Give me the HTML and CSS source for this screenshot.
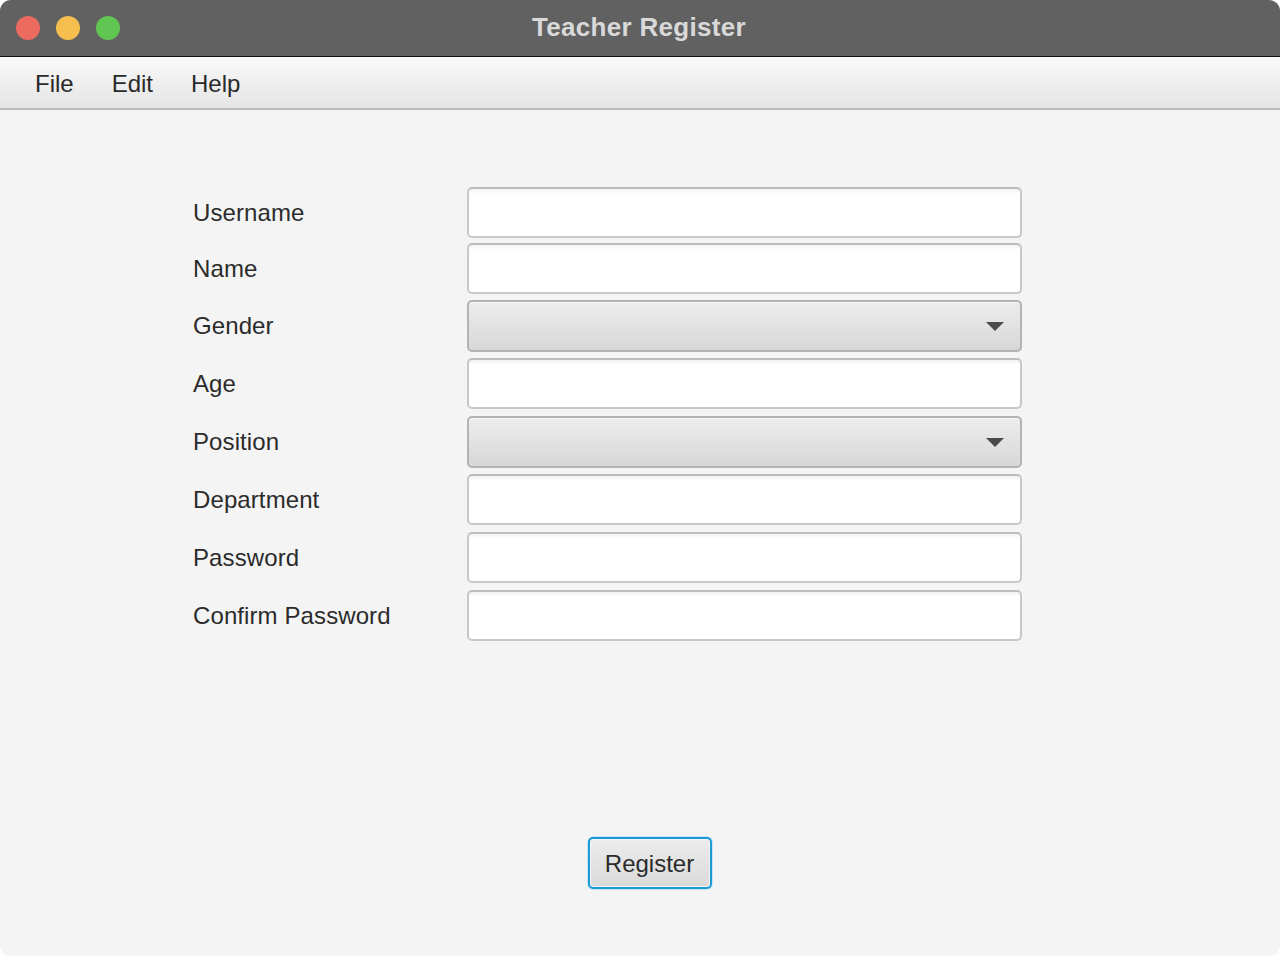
FILE: index.html
```html
<!DOCTYPE html>
<html>
<head>
<meta charset="utf-8">
<link rel="stylesheet" href="styles.css">
</head>
<body>
<div class="window">
  <div class="titlebar">
    <div class="lights">
      <span class="light red"></span>
      <span class="light yellow"></span>
      <span class="light green"></span>
    </div>
    <div class="title">Teacher Register</div>
  </div>
  <div class="menubar">
    <span class="menu">File</span>
    <span class="menu">Edit</span>
    <span class="menu">Help</span>
  </div>
  <div class="content">
    <div class="form">
      <div class="row r1"><label>Username</label><div class="field"></div></div>
      <div class="row r2"><label>Name</label><div class="field"></div></div>
      <div class="row r3"><label>Gender</label><div class="combo"><span class="arrow"></span></div></div>
      <div class="row r4"><label>Age</label><div class="field"></div></div>
      <div class="row r5"><label>Position</label><div class="combo"><span class="arrow"></span></div></div>
      <div class="row r6"><label>Department</label><div class="field"></div></div>
      <div class="row r7"><label>Password</label><div class="field"></div></div>
      <div class="row r8"><label>Confirm Password</label><div class="field"></div></div>
    </div>
    <div class="actions">
      <button class="btn">Register</button>
    </div>
  </div>
</div>
</body>
</html>
```

FILE: styles.css
```css
html, body {
  margin: 0;
  padding: 0;
  background: #ffffff;
}
body {
  width: 1280px;
  height: 956px;
  overflow: hidden;
  font-family: "Liberation Sans", Arial, sans-serif;
}
.window {
  width: 1280px;
  height: 956px;
  border-radius: 11px;
  overflow: hidden;
  background: #f4f4f4;
  display: flex;
  flex-direction: column;
}
.titlebar {
  height: 56px;
  background: #616161;
  border-bottom: 1px solid #111111;
  position: relative;
  display: flex;
  align-items: center;
  justify-content: center;
  flex-shrink: 0;
}
.lights {
  position: absolute;
  left: 16px;
  top: 16px;
  display: flex;
  gap: 16px;
}
.light {
  width: 24px;
  height: 24px;
  border-radius: 50%;
  display: block;
}
.red { background: #ed6a5e; }
.yellow { background: #f5bf4f; }
.green { background: #61c554; }
.title {
  color: #d9d9d9;
  font-weight: bold;
  font-size: 26px;
  letter-spacing: 0.3px;
  margin-top: -2px;
  margin-left: -2px;
}
.menubar {
  height: 51px;
  background: linear-gradient(#f9f9f9, #e5e5e5);
  border-bottom: 2px solid #bcbcbc;
  display: flex;
  align-items: center;
  padding-left: 35px;
  gap: 38px;
  flex-shrink: 0;
}
.menu {
  font-size: 24px;
  color: #2a2a2a;
  margin-top: 2px;
}
.content {
  flex: 1;
  display: flex;
  flex-direction: column;
  background: #f4f4f4;
}
.form {
  margin-top: 77px;
  margin-left: 193px;
  display: grid;
  grid-template-columns: 274px 555px;
  grid-template-rows: 56px 57px 58px 58px 58px 58px 58px 51px;
}
.row {
  display: contents;
}
.row label {
  font-size: 24px;
  letter-spacing: 0.1px;
  color: #2b2b2b;
  height: 51px;
  line-height: 52px;
  white-space: nowrap;
}
.field {
  height: 51px;
  box-sizing: border-box;
  background: linear-gradient(#f2f2f2 0px, #ffffff 5px, #ffffff 100%);
  border: 2px solid #c8c8c8;
  border-top-color: #bdbdbd;
  border-radius: 5px;
}
.combo {
  height: 52px;
  box-sizing: border-box;
  background: linear-gradient(#ededed, #d7d7d7);
  border: 2px solid #b3b3b3;
  border-radius: 5px;
  box-shadow: inset 0 1px 0 #f8f8f8;
  position: relative;
}
.arrow {
  position: absolute;
  right: 16px;
  top: 20px;
  width: 0;
  height: 0;
  border-left: 9px solid transparent;
  border-right: 9px solid transparent;
  border-top: 9px solid #4a4a4a;
}
.actions {
  margin-top: 196px;
  display: flex;
  justify-content: center;
  padding-left: 19px;
}
.btn {
  width: 124px;
  height: 52px;
  box-sizing: border-box;
  border: 2px solid #1a9ad6;
  border-radius: 5px;
  background: linear-gradient(#ececec, #dadada);
  box-shadow: 0 0 0 1px #c5e5f3, inset 0 0 0 1px #f4f4f4;
  font-family: "Liberation Sans", Arial, sans-serif;
  font-size: 24px;
  color: #2b2b2b;
  padding: 2px 0 0 0;
}
```
